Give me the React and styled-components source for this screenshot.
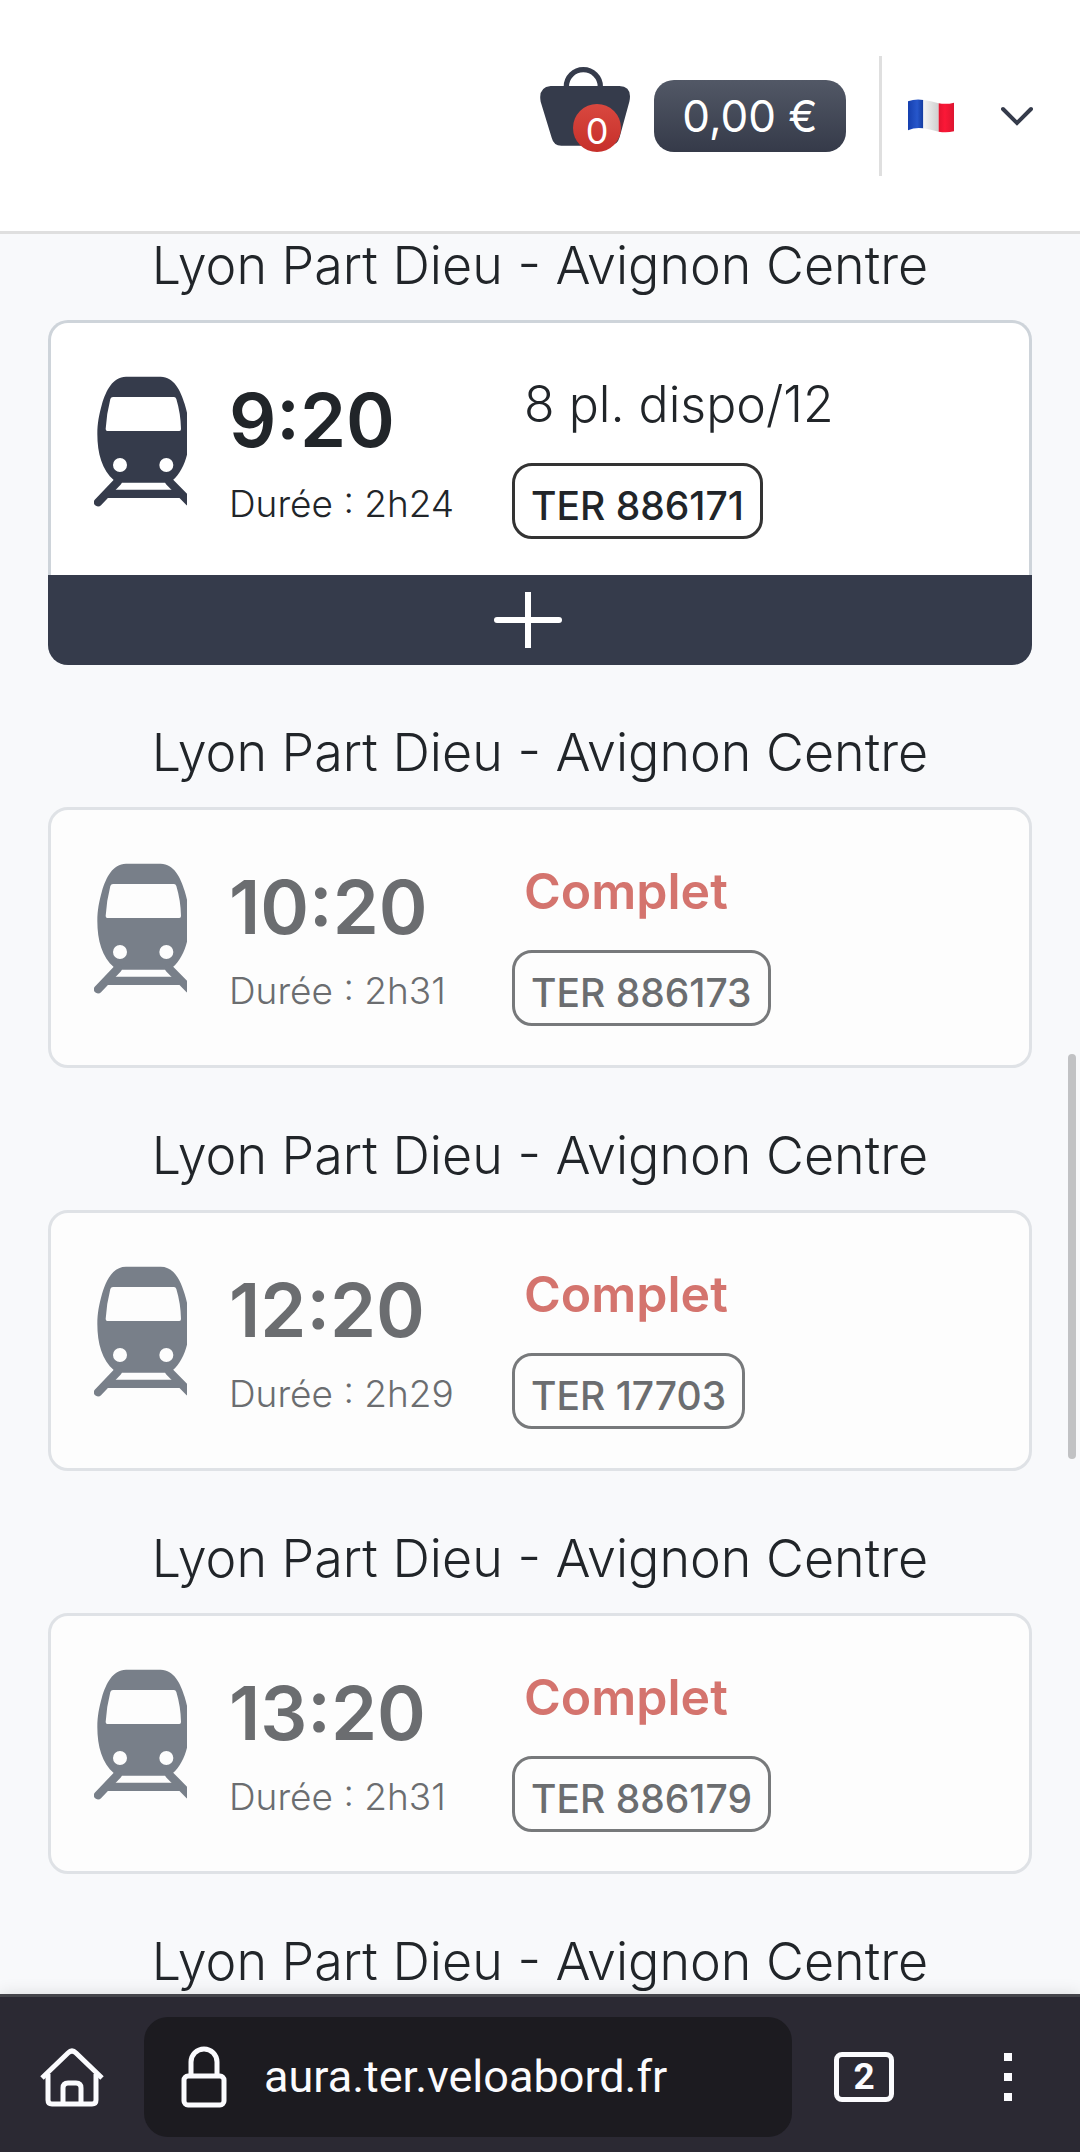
import { useState } from "react";
import styled, { createGlobalStyle } from "styled-components";

const GlobalStyle = createGlobalStyle`
  * {
    box-sizing: border-box;
  }

  body {
    margin: 0;
    background-color: #f8f9fb;
    color: #212529;
    font-family: Inter, "Open Sans", sans-serif;
  }

  button,
  input {
    margin: 0;
    padding: 0;
    border: none;
    background: none;
    color: inherit;
    font-family: inherit;
  }

  svg {
    display: block;
  }
`;

const Screen = styled.div`
  display: flex;
  flex-direction: column;
  height: 100vh;
  overflow: hidden;
`;

const Header = styled.header`
  display: flex;
  flex-shrink: 0;
  align-items: center;
  justify-content: flex-end;
  height: 234px;
  padding: 0 32px;
  border-bottom: 3px solid #dfdfdf;
  background-color: #fff;
`;

const BasketButton = styled.button`
  position: relative;
  width: 90px;
  height: 98px;
  margin-right: 24px;
`;

const BasketCount = styled.span`
  position: absolute;
  right: 9px;
  bottom: 13px;
  width: 48px;
  height: 48px;
  border-radius: 50%;
  background: linear-gradient(#d9483f, #c62f2a);
  color: #fff;
  font-size: 36px;
  line-height: 54px;
  text-align: center;
`;

const Total = styled.a`
  width: 192px;
  height: 72px;
  border-radius: 20px;
  background: linear-gradient(#525866, #353a49);
  color: #fff;
  font-size: 44px;
  line-height: 72px;
  text-align: center;
  text-decoration: none;
`;

const Divider = styled.div`
  width: 3px;
  height: 120px;
  margin: 0 26px 0 33px;
  background-color: #dfdfdf;
`;

const LanguageButton = styled.button`
  display: flex;
  align-items: center;
  justify-content: space-between;
  width: 140px;
  height: 72px;
  padding: 0 15px 0 0;
`;

const Main = styled.main`
  position: relative;
  flex: 1;
  min-height: 0;
  overflow: hidden;
  padding: 0 48px;
`;

const ScrollThumb = styled.div`
  position: absolute;
  top: 46.6%;
  right: 4px;
  width: 8px;
  height: 23%;
  border-radius: 4px;
  background-color: #c1c2c4;
`;

const Trip = styled.section`
  margin-bottom: 56px;
`;

const Route = styled.h2`
  margin: 0 0 22px;
  font-size: 52px;
  font-weight: 300;
  line-height: 64px;
  text-align: center;
`;

const Card = styled.article`
  border: 3px solid ${({ $full }) => ($full ? "#dfe2e6" : "#ced4da")};
  border-bottom-width: ${({ $full }) => ($full ? "3px" : "0")};
  border-radius: 20px;
  background-color: ${({ $full }) => ($full ? "#fdfdfd" : "#fff")};
`;

const CardBody = styled.div`
  display: grid;
  grid-template-columns: 93px 241px 1fr;
  column-gap: 42px;
  height: ${({ $full }) => ($full ? "255px" : "252px")};
  padding: 53px 42px 0 43px;
  color: ${({ $full }) => ($full ? "#6b6d70" : "#212529")};
`;

const TrainIcon = styled.svg`
  width: 93px;
  height: 131px;
  color: ${({ $full }) => ($full ? "#787f89" : "#353b4b")};
`;

const Time = styled.div`
  margin-bottom: 16px;
  font-size: 74px;
  font-weight: 600;
  line-height: 88px;
`;

const Duration = styled.div`
  font-size: 37px;
  font-weight: 300;
  line-height: 48px;
  white-space: nowrap;
`;

const Seats = styled.div`
  padding-left: 12px;
  font-size: 50px;
  font-weight: ${({ $full }) => ($full ? 600 : 300)};
  line-height: 56px;
  color: ${({ $full }) => ($full ? "#d4746e" : "inherit")};
`;

const TrainNumber = styled.div`
  width: fit-content;
  height: 76px;
  margin-top: 31px;
  padding: 10px 16px 0;
  border: 3px solid ${({ $full }) => ($full ? "#77797b" : "#333")};
  border-radius: 20px;
  font-size: 39px;
  font-weight: 500;
  line-height: 60px;
`;

const AddButton = styled.button`
  display: flex;
  align-items: center;
  justify-content: center;
  width: calc(100% + 6px);
  height: 90px;
  margin: 0 -3px;
  padding-right: 24px;
  border-radius: 0 0 20px 20px;
  background-color: #353b4b;
  color: #fff;
`;

const BrowserBar = styled.footer`
  display: flex;
  flex-shrink: 0;
  align-items: center;
  height: 158px;
  padding: 5px 66px 0 40px;
  border-top: 3px solid #45454b;
  background-color: #2b2933;
  box-shadow: 0 0 16px rgba(0, 0, 0, 0.12);
  color: #fbfbfe;
  z-index: 1;
`;

const AddressBar = styled.label`
  display: flex;
  flex: 1;
  align-items: center;
  gap: 37px;
  min-width: 0;
  height: 120px;
  margin: 0 42px 0 40px;
  padding: 0 37px;
  border-radius: 24px;
  background-color: #1c1b20;
`;

const AddressInput = styled.input`
  flex: 1;
  min-width: 0;
  font-family: Roboto, sans-serif;
  font-size: 45px;
  line-height: 56px;
`;

const TabsButton = styled.button`
  width: 60px;
  height: 50px;
  margin-right: 108px;
  border: 5px solid currentColor;
  border-radius: 8px;
  font-family: Roboto, sans-serif;
  font-size: 37px;
  font-weight: 700;
  line-height: 40px;
`;

const MenuButton = styled.button`
  display: flex;
  flex-direction: column;
  align-items: center;
  gap: 12px;
  width: 12px;
`;

const Dot = styled.span`
  width: 8px;
  height: 8px;
  background-color: currentColor;
`;

const trips = [
  { time: "9:20", duration: "2h24", seats: 8, number: "TER 886171" },
  { time: "10:20", duration: "2h31", seats: 0, number: "TER 886173" },
  { time: "12:20", duration: "2h29", seats: 0, number: "TER 17703" },
  { time: "13:20", duration: "2h31", seats: 0, number: "TER 886179" },
];

const ROUTE = "Lyon Part Dieu - Avignon Centre";

const Basket = () => (
  <svg width="90" height="98" viewBox="60 78 270 294" fill="#353b4b" aria-hidden="true">
    <path
      d="M139 142 V137 A51 51 0 0 1 241 137 V142"
      fill="none"
      stroke="#353b4b"
      strokeWidth="16"
    />
    <path d="M92 135 H298 Q338 137 328 182 L299 288 Q292 314 268 314 H124 Q101 314 95 290 L62 182 Q54 139 92 135 Z" />
  </svg>
);

const FrenchFlag = () => (
  <svg width="46" height="34" viewBox="0 0 138 102" aria-hidden="true">
    <defs>
      <linearGradient id="flag-blue">
        <stop offset="0" stopColor="#153fae" />
        <stop offset="0.6" stopColor="#2757cb" />
        <stop offset="1" stopColor="#123a9e" />
      </linearGradient>
      <linearGradient id="flag-white">
        <stop offset="0" stopColor="#f4f4f4" />
        <stop offset="1" stopColor="#cfcfcf" />
      </linearGradient>
      <linearGradient id="flag-red">
        <stop offset="0" stopColor="#e31430" />
        <stop offset="0.4" stopColor="#fb1837" />
        <stop offset="1" stopColor="#dd1530" />
      </linearGradient>
    </defs>
    <path d="M0 7 Q22 -1 46 3 V88 Q22 84 0 94 Z" fill="url(#flag-blue)" />
    <path d="M46 3 Q68 6 92 13 V98 Q68 92 46 88 Z" fill="url(#flag-white)" />
    <path d="M92 13 Q116 17 138 11 V97 Q116 102 92 98 Z" fill="url(#flag-red)" />
  </svg>
);

const Chevron = () => (
  <svg width="32" height="20" viewBox="0 0 32 20" aria-hidden="true">
    <path
      d="M2 3 L16 17 L30 3"
      fill="none"
      stroke="#353b4b"
      strokeWidth="4"
      strokeLinecap="round"
    />
  </svg>
);

const Train = ({ full }) => (
  <TrainIcon $full={full} viewBox="192 228 279 393" fill="currentColor" aria-hidden="true">
    <path
      fillRule="evenodd"
      d="M288 230 H392 C432 230 452 272 464 312 C474 345 478 370 478 402 C478 460 462 510 428 541 Q421 548 405 548 H277 Q260 548 252 541 C216 510 202 460 202 402 C202 370 207 345 216 312 C228 272 248 230 288 230 Z
        M249 291 Q243 291 241 297 Q230 340 227 387 Q227 393 232 393 H448 Q453 393 453 387 Q452 340 439 297 Q437 291 432 291 Z
        M249 495 a21 21 0 1 0 42 0 a21 21 0 1 0 -42 0 Z
        M388 495 a21 21 0 1 0 42 0 a21 21 0 1 0 -42 0 Z"
    />
    <path
      d="M264 544 L204 607 M417 544 L478 606"
      stroke="currentColor"
      strokeWidth="25"
      strokeLinecap="round"
    />
    <path d="M228 569 H452 V594 H228 Z" />
  </TrainIcon>
);

const Plus = () => (
  <svg width="68" height="56" viewBox="0 0 68 56" aria-hidden="true">
    <path d="M3 28 H65" stroke="currentColor" strokeWidth="6" strokeLinecap="round" />
    <path d="M34 0 V56" stroke="currentColor" strokeWidth="6" />
  </svg>
);

const Home = () => (
  <svg
    width="64"
    height="60"
    viewBox="0 0 64 60"
    fill="none"
    stroke="currentColor"
    strokeWidth="5"
    strokeLinejoin="round"
    aria-hidden="true"
  >
    <path d="M2 31 L28 6 Q32 2 36 6 L62 31" />
    <path d="M8 27 V53 Q8 57 12 57 H52 Q56 57 56 53 V27" />
    <path d="M23 57 V41 Q23 36 28 36 H36 Q41 36 41 41 V57" />
  </svg>
);

const Lock = () => (
  <svg
    width="46"
    height="62"
    viewBox="0 0 46 62"
    fill="none"
    stroke="currentColor"
    strokeWidth="5"
    aria-hidden="true"
  >
    <rect x="3" y="30" width="40" height="29" rx="4" />
    <path d="M10 30 V16 A13 13 0 0 1 36 16 V30" />
  </svg>
);

const TripCard = ({ trip }) => {
  const full = trip.seats === 0;

  return (
    <Trip>
      <Route>{ROUTE}</Route>
      <Card $full={full}>
        <CardBody $full={full}>
          <Train full={full} />
          <div>
            <Time>{trip.time}</Time>
            <Duration>Durée : {trip.duration}</Duration>
          </div>
          <div>
            <Seats $full={full}>
              {full ? "Complet" : `${trip.seats} pl. dispo/12`}
            </Seats>
            <TrainNumber $full={full}>{trip.number}</TrainNumber>
          </div>
        </CardBody>
        {!full && (
          <AddButton type="button" aria-label="Ajouter">
            <Plus />
          </AddButton>
        )}
      </Card>
    </Trip>
  );
};

const App = () => {
  const [address, setAddress] = useState("aura.ter.veloabord.fr");

  return (
    <>
      <GlobalStyle />
      <Screen>
        <Header>
          <BasketButton type="button" aria-label="Panier">
            <Basket />
            <BasketCount>0</BasketCount>
          </BasketButton>
          <Total href="#panier">0,00 €</Total>
          <Divider />
          <LanguageButton type="button" aria-label="Langue" aria-haspopup="listbox">
            <FrenchFlag />
            <Chevron />
          </LanguageButton>
        </Header>
        <Main>
          {trips.map((trip) => (
            <TripCard key={trip.number} trip={trip} />
          ))}
          <Route>{ROUTE}</Route>
          <ScrollThumb />
        </Main>
        <BrowserBar>
          <button type="button" aria-label="Accueil">
            <Home />
          </button>
          <AddressBar>
            <Lock />
            <AddressInput
              type="text"
              aria-label="Adresse"
              value={address}
              onChange={(e) => setAddress(e.target.value)}
            />
          </AddressBar>
          <TabsButton type="button">2</TabsButton>
          <MenuButton type="button" aria-label="Menu">
            <Dot />
            <Dot />
            <Dot />
          </MenuButton>
        </BrowserBar>
      </Screen>
    </>
  );
};

export default App;
